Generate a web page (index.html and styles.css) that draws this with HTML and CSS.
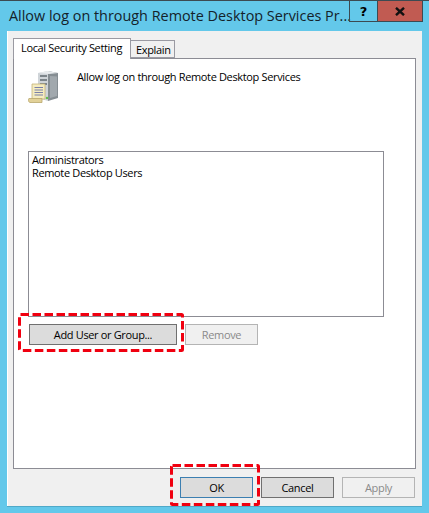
FILE: index.html
```html
<!DOCTYPE html>
<html lang="en">
<head>
    <meta charset="UTF-8">
    <title>Allow log on through Remote Desktop Services Properties</title>
    <link rel="stylesheet" href="styles.css">
</head>
<body>
    <div class="window">
        <div class="titlebar">
            <div class="title">Allow log on through Remote Desktop Services Pr...</div>
            <div class="caption-btn help">?</div>
            <div class="caption-btn close">
                <svg width="10" height="9" viewBox="0 0 10 9"><path d="M1 0.8L9 8.2M9 0.8L1 8.2" stroke="#111" stroke-width="2.4" fill="none"/></svg>
            </div>
        </div>
        <div class="client">
            <div class="tabs">
                <div class="tab active">Local Security Setting</div>
                <div class="tab">Explain</div>
            </div>
            <div class="panel">
                <div class="policy">
                    <svg class="policy-icon" width="32" height="34" viewBox="0 0 32 34">
                        <path d="M10 3L20 1V31L10 28Z" fill="#cfd4d8"/>
                        <path d="M20 1L30 3V28L20 31Z" fill="#858d92"/>
                        <path d="M10 3L20 1L30 3L21 4Z" fill="#e8ebed"/>
                        <path d="M12 5H19V7H12ZM12 9H19V11H12ZM12 13H19V15H12Z" fill="#7d858a"/>
                        <path d="M22 6L29 6.500V26L22 28Z" fill="#a1a8ad"/>
                        <circle cx="19" cy="28" r="1.200" fill="#5fbf4a"/>
                        <path d="M4 14H17V29H4Z" fill="#f5ecc0" stroke="#c4b27a" stroke-width="0.800"/>
                        <path d="M1 28.500H14V32.500H2C0.200 32.500 0.200 28.500 1 28.500Z" fill="#e2d198" stroke="#b9a76c" stroke-width="0.800"/>
                        <path d="M6.500 17.500H15M6.500 20H15M6.500 22.500H15M6.500 25H15" stroke="#7a80a8" stroke-width="1"/>
                    </svg>
                    <div class="policy-name">Allow log on through Remote Desktop Services</div>
                </div>
                <div class="listbox">
                    <div>Administrators</div>
                    <div>Remote Desktop Users</div>
                </div>
                <div class="list-actions">
                    <button class="btn add">Add User or Group...</button>
                    <button class="btn remove" disabled>Remove</button>
                </div>
            </div>
            <div class="footer">
                <button class="btn ok">OK</button>
                <button class="btn">Cancel</button>
                <button class="btn" disabled>Apply</button>
            </div>
        </div>
        <svg class="mark mark-add" width="166" height="39" viewBox="0 0 166 39">
            <rect x="1.500" y="1.500" width="163" height="36" rx="1"/>
        </svg>
        <svg class="mark mark-ok" width="90" height="42" viewBox="0 0 90 42">
            <rect x="1.500" y="1.500" width="87" height="39" rx="1"/>
        </svg>
    </div>
</body>
</html>
```

FILE: styles.css
```css
html, body {
    margin: 0;
    padding: 0;
}
body {
    width: 429px;
    height: 513px;
    overflow: hidden;
    font-family: 'Open Sans', 'Noto Sans', sans-serif;
    font-size: 11px;
    letter-spacing: -0.35px;
    color: #000;
}
.window {
    position: relative;
    width: 429px;
    height: 513px;
    box-sizing: border-box;
    background-color: #63c8ea;
    border-top: 1px solid #3c4a52;
    padding: 0 7px 7px 7px;
    display: flex;
    flex-direction: column;
}
.titlebar {
    height: 30px;
    flex: none;
    display: flex;
    align-items: flex-start;
    margin-right: -1px;
}
.title {
    flex: 1;
    min-width: 0;
    font-size: 14.4px;
    letter-spacing: 0;
    line-height: 29px;
    padding-left: 2px;
    white-space: nowrap;
    color: #14222a;
}
.caption-btn {
    flex: none;
    height: 21px;
    box-sizing: border-box;
    border: 1px solid #3c4a52;
    border-top: none;
    display: flex;
    align-items: center;
    justify-content: center;
}
.help {
    width: 28px;
    border-right: none;
    font-family: 'DejaVu Sans', sans-serif;
    font-weight: bold;
    font-size: 13px;
    letter-spacing: 0;
}
.close {
    width: 46px;
    background-color: #c15b52;
}
.client {
    flex: 1;
    background-color: #f0f0f0;
    border-left: 1px solid #fff;
    padding: 7px 6px 7px 5px;
    display: flex;
    flex-direction: column;
    box-shadow: 0 1px 0 #4fa9c8;
}
.tabs {
    display: flex;
    align-items: flex-end;
    height: 21px;
    flex: none;
    position: relative;
    z-index: 1;
    margin-bottom: -1px;
}
.tab {
    height: 18px;
    width: 44px;
    box-sizing: border-box;
    border: 1px solid #9a9aa2;
    border-left: none;
    background-color: #f0f0f0;
    padding: 0 0 0 5px;
    line-height: 18px;
    margin-bottom: 1px;
}
.tab.active {
    height: 21px;
    width: 118px;
    margin-bottom: 0;
    border-left: 1px solid #9a9aa2;
    border-bottom: none;
    background-color: #fff;
    line-height: 17px;
    padding: 0 0 0 7px;
    white-space: nowrap;
}
.panel {
    height: 411px;
    flex: none;
    box-sizing: border-box;
    background-color: #fff;
    border: 1px solid #8c8c94;
    padding: 0 0 0 14px;
}
.policy {
    display: flex;
    align-items: flex-start;
    height: 92px;
}
.policy-icon {
    margin-top: 11px;
}
.policy-name {
    margin: 10px 0 0 17px;
    line-height: 16px;
}
.listbox {
    width: 356px;
    height: 166px;
    box-sizing: border-box;
    border: 1px solid #8c8c94;
    padding: 1px 3px;
    line-height: 13px;
}
.list-actions {
    display: flex;
    gap: 8px;
    margin: 7px 0 0 1px;
}
.btn {
    width: 73px;
    height: 21px;
    box-sizing: border-box;
    padding: 0;
    border: 1px solid #707070;
    background-color: #dcdcdc;
    font-family: inherit;
    font-size: inherit;
    letter-spacing: inherit;
    color: #000;
}
.btn:disabled {
    background-color: #f0f0f0;
    border-color: #b4b4b4;
    color: #8a8a8a;
}
.add {
    width: 148px;
}
.footer {
    display: flex;
    justify-content: flex-end;
    gap: 8px;
    margin: 8px 1px 0 0;
}
.ok {
    border-color: #3c7fb1;
}
.mark {
    position: absolute;
}
.mark rect {
    fill: none;
    stroke: #f00010;
    stroke-width: 3;
    stroke-dasharray: 8.500 3.500;
}
.mark-add {
    left: 18px;
    top: 312px;
}
.mark-ok {
    left: 170px;
    top: 463px;
}
```
